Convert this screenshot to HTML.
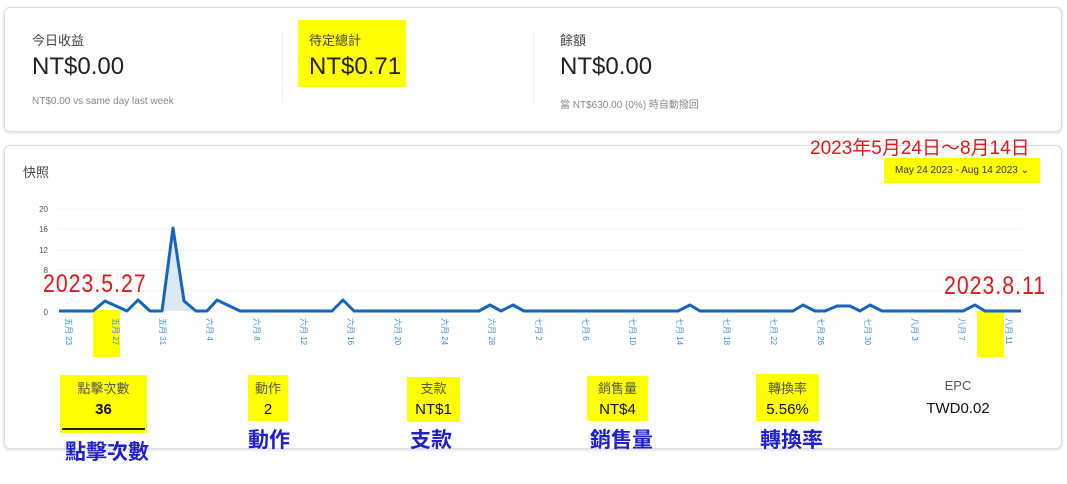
<!DOCTYPE html>
<html><head><meta charset="utf-8"><style>
body{margin:0;width:1067px;height:484px;background:#fff;position:relative;overflow:hidden;font-family:"Liberation Sans","Noto Sans CJK TC",sans-serif;}
.a{position:absolute;white-space:nowrap;}
.card{position:absolute;border:1px solid #ddd;border-radius:6px;box-shadow:0 1px 3px rgba(0,0,0,.15);background:#fff;}
.lbl{font-size:13px;color:#444;}
.big{font-size:24px;color:#222;}
.sub{font-size:10px;color:#888;}
.y{background:#ffff00;}
.blue{color:#2020d0;font-size:21px;font-weight:bold;}
.red{color:#e01818;font-size:25px;letter-spacing:1.2px;font-family:"Liberation Sans",sans-serif;transform:scaleX(.85);transform-origin:left;}
.ml{font-size:13px;color:#555;text-align:center;}
.mv{font-size:15px;color:#111;text-align:center;}
</style></head><body>
<div class="card" style="left:4px;top:7px;width:1056px;height:123px"></div>
<div class="a" style="left:282px;top:30px;width:1px;height:75px;background:#eee"></div>
<div class="a" style="left:533px;top:30px;width:1px;height:75px;background:#eee"></div>
<div class="a lbl" style="left:32px;top:30px">今日收益</div>
<div class="a big" style="left:32px;top:53px">NT$0.00</div>
<div class="a sub" style="left:32px;top:96px">NT$0.00 vs same day last week</div>
<div class="a y" style="left:298px;top:20px;width:108px;height:67px"></div>
<div class="a lbl" style="left:309px;top:30px">待定總計</div>
<div class="a big" style="left:309px;top:53px">NT$0.71</div>
<div class="a lbl" style="left:560px;top:30px">餘額</div>
<div class="a big" style="left:560px;top:53px">NT$0.00</div>
<div class="a sub" style="left:560px;top:96px">當 NT$630.00 (0%) 時自動撥回</div>

<div class="card" style="left:4px;top:145px;width:1056px;height:302px"></div>
<div class="a lbl" style="left:23px;top:162px">快照</div>
<div class="a" style="left:810px;top:133px;color:#e01818;font-size:19px">2023年5月24日～8月14日</div>
<div class="a y" style="left:884px;top:158px;width:156px;height:25px;font-size:10px;color:#333;line-height:25px;text-align:center">May 24 2023 - Aug 14 2023 ⌄</div>

<div class="a y" style="left:93px;top:310px;width:27px;height:47px"></div>
<div class="a y" style="left:977px;top:311px;width:27px;height:46px"></div>
<svg class="a" style="left:0;top:190px" width="1067" height="175">
<g stroke="#f0f0f0" stroke-width="1">
<line x1="58" y1="19" x2="1022" y2="19"/><line x1="58" y1="39" x2="1022" y2="39"/><line x1="58" y1="60" x2="1022" y2="60"/><line x1="58" y1="80" x2="1022" y2="80"/><line x1="58" y1="101" x2="1022" y2="101"/></g>
<g font-size="8" fill="#555" text-anchor="end" font-family="Liberation Sans">
<text x="48" y="22">20</text><text x="48" y="42">16</text><text x="48" y="63">12</text><text x="48" y="83">8</text><text x="48" y="125">0</text></g>
<polygon fill="#dde8f5" points="162,121 173,38 184,111 196,121"/>
<polyline fill="none" stroke="#1565c0" stroke-width="3" stroke-linejoin="round" points="59,121 93,121 105,111 127,121 138,110 150,121 162,121 173,38 184,111 196,121 207,121 217,110 240,121 332,121 343,110 354,121 479,121 490,115 501,121 513,115 524,121 678,121 690,115 700,121 793,121 803,115 815,121 825,121 837,116 850,116 860,121 870,115 882,121 963,121 975,115 985,121 1021,121"/>
<g font-size="8" fill="#3a8fd0" font-family="Liberation Sans,Noto Sans CJK TC,sans-serif">
<text transform="translate(66,128) rotate(90)">五月 23</text><text transform="translate(113,128) rotate(90)">五月 27</text><text transform="translate(160,128) rotate(90)">五月 31</text><text transform="translate(207,128) rotate(90)">六月 4</text><text transform="translate(254,128) rotate(90)">六月 8</text><text transform="translate(301,128) rotate(90)">六月 12</text><text transform="translate(348,128) rotate(90)">六月 16</text><text transform="translate(395,128) rotate(90)">六月 20</text><text transform="translate(442,128) rotate(90)">六月 24</text><text transform="translate(489,128) rotate(90)">六月 28</text><text transform="translate(536,128) rotate(90)">七月 2</text><text transform="translate(583,128) rotate(90)">七月 6</text><text transform="translate(630,128) rotate(90)">七月 10</text><text transform="translate(677,128) rotate(90)">七月 14</text><text transform="translate(724,128) rotate(90)">七月 18</text><text transform="translate(771,128) rotate(90)">七月 22</text><text transform="translate(818,128) rotate(90)">七月 26</text><text transform="translate(865,128) rotate(90)">七月 30</text><text transform="translate(912,128) rotate(90)">八月 3</text><text transform="translate(959,128) rotate(90)">八月 7</text><text transform="translate(1006,128) rotate(90)">八月 11</text></g>
</svg>
<div class="a red" style="left:43px;top:270px">2023.5.27</div>
<div class="a red" style="left:944px;top:272px">2023.8.11</div>

<div class="a y" style="left:60px;top:375px;width:87px;height:58px"></div>
<div class="a" style="left:62px;top:428px;width:83px;height:2px;background:#222"></div>
<div class="a ml" style="left:60px;top:378px;width:87px">點擊次數</div>
<div class="a mv" style="left:60px;top:401px;width:87px;font-weight:bold">36</div>
<div class="a blue" style="left:65px;top:436px">點擊次數</div>

<div class="a y" style="left:248px;top:375px;width:40px;height:46px"></div>
<div class="a ml" style="left:248px;top:378px;width:40px">動作</div>
<div class="a mv" style="left:248px;top:401px;width:40px">2</div>
<div class="a blue" style="left:248px;top:424px">動作</div>

<div class="a y" style="left:407px;top:377px;width:53px;height:45px"></div>
<div class="a ml" style="left:407px;top:378px;width:53px">支款</div>
<div class="a mv" style="left:407px;top:401px;width:53px">NT$1</div>
<div class="a blue" style="left:410px;top:424px">支款</div>

<div class="a y" style="left:587px;top:376px;width:61px;height:45px"></div>
<div class="a ml" style="left:587px;top:378px;width:61px">銷售量</div>
<div class="a mv" style="left:587px;top:401px;width:61px">NT$4</div>
<div class="a blue" style="left:590px;top:424px">銷售量</div>

<div class="a y" style="left:756px;top:374px;width:63px;height:47px"></div>
<div class="a ml" style="left:756px;top:378px;width:63px">轉換率</div>
<div class="a mv" style="left:756px;top:401px;width:63px">5.56%</div>
<div class="a blue" style="left:760px;top:424px">轉換率</div>

<div class="a ml" style="left:918px;top:378px;width:80px">EPC</div>
<div class="a mv" style="left:918px;top:400px;width:80px">TWD0.02</div>
</body></html>
